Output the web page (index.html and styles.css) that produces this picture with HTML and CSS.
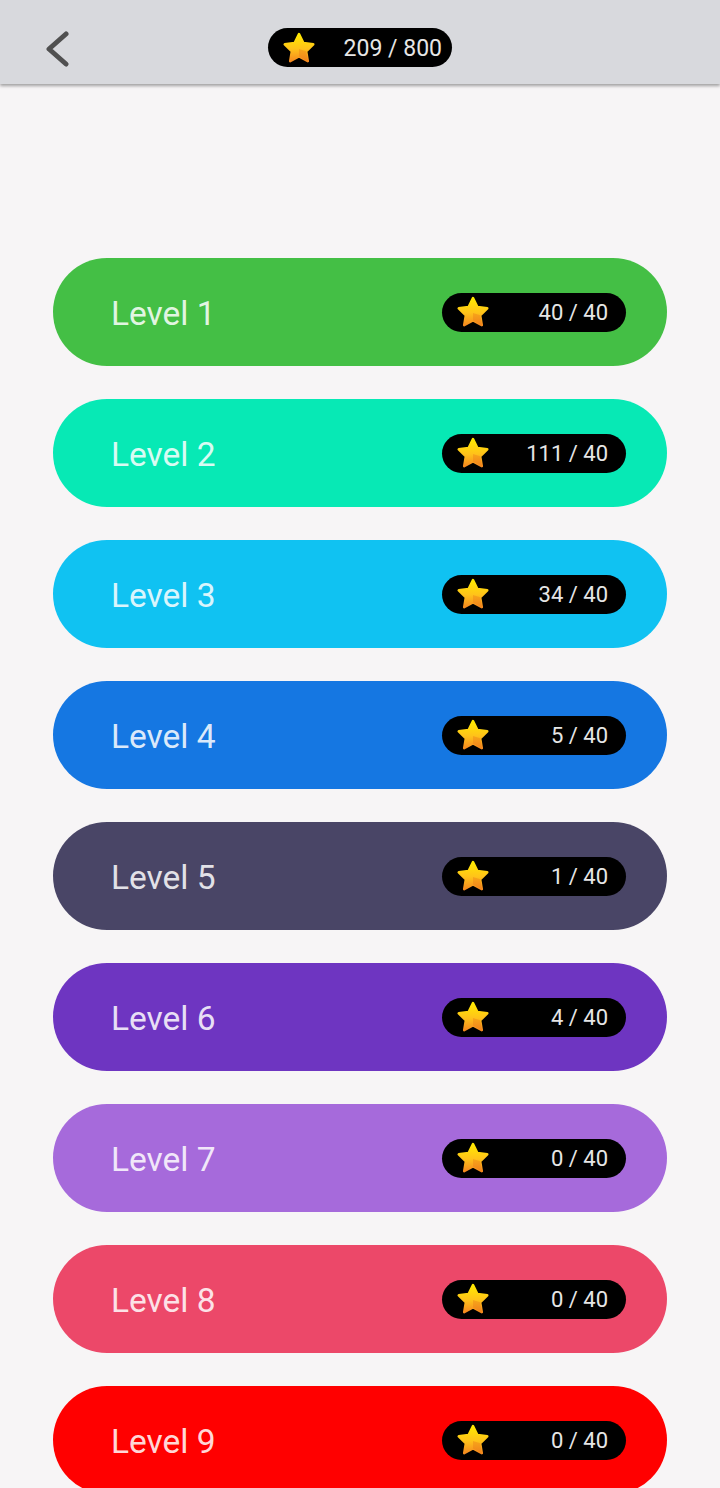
FILE: index.html
```html
<!DOCTYPE html>
<html>
<head>
<meta charset="utf-8">
<link rel="stylesheet" href="styles.css">
</head>
<body>
<svg width="0" height="0" class="defs">
  <defs>
    <linearGradient id="sg" x1="0" y1="0" x2="0" y2="1">
      <stop offset="0" stop-color="#ffea00"/>
      <stop offset="0.55" stop-color="#ffc21a"/>
      <stop offset="1" stop-color="#f58a1f"/>
    </linearGradient>
    <symbol id="star" viewBox="0 0 34 34">
      <polygon points="17,3 21.41,11.93 31.27,13.36 24.13,20.32 25.82,30.14 17,25.5 8.18,30.14 9.87,20.32 2.73,13.36 12.59,11.93" fill="url(#sg)" stroke="url(#sg)" stroke-width="2.5" stroke-linejoin="round"/>
      <polygon points="17,18 24.13,20.32 25.82,30.14 17,25.5" fill="#e8741a" opacity="0.35"/>
    </symbol>
  </defs>
</svg>
<header class="topbar">
  <button class="back" aria-label="Back">
    <svg width="30" height="40" viewBox="0 0 30 40"><polyline points="22,7 5,22 22,37" fill="none" stroke="#505050" stroke-width="5" stroke-linecap="round" stroke-linejoin="round"/></svg>
  </button>
  <div class="pill total">
    <svg class="star" width="34" height="34"><use href="#star"/></svg>
    <span class="count">209 / 800</span>
  </div>
</header>
<main class="levels">
  <div class="level c1"><span class="name">Level 1</span><div class="pill"><svg class="star" width="34" height="34"><use href="#star"/></svg><span class="count">40 / 40</span></div></div>
  <div class="level c2"><span class="name">Level 2</span><div class="pill"><svg class="star" width="34" height="34"><use href="#star"/></svg><span class="count">111 / 40</span></div></div>
  <div class="level c3"><span class="name">Level 3</span><div class="pill"><svg class="star" width="34" height="34"><use href="#star"/></svg><span class="count">34 / 40</span></div></div>
  <div class="level c4"><span class="name">Level 4</span><div class="pill"><svg class="star" width="34" height="34"><use href="#star"/></svg><span class="count">5 / 40</span></div></div>
  <div class="level c5"><span class="name">Level 5</span><div class="pill"><svg class="star" width="34" height="34"><use href="#star"/></svg><span class="count">1 / 40</span></div></div>
  <div class="level c6"><span class="name">Level 6</span><div class="pill"><svg class="star" width="34" height="34"><use href="#star"/></svg><span class="count">4 / 40</span></div></div>
  <div class="level c7"><span class="name">Level 7</span><div class="pill"><svg class="star" width="34" height="34"><use href="#star"/></svg><span class="count">0 / 40</span></div></div>
  <div class="level c8"><span class="name">Level 8</span><div class="pill"><svg class="star" width="34" height="34"><use href="#star"/></svg><span class="count">0 / 40</span></div></div>
  <div class="level c9"><span class="name">Level 9</span><div class="pill"><svg class="star" width="34" height="34"><use href="#star"/></svg><span class="count">0 / 40</span></div></div>
</main>
</body>
</html>
```

FILE: styles.css
```css
* { box-sizing: border-box; }
html, body {
  margin: 0;
  padding: 0;
  background: #f7f5f6;
  font-family: Roboto, "Liberation Sans", sans-serif;
  overflow: hidden;
  height: 1488px;
}
.defs { position: absolute; width: 0; height: 0; }
.topbar {
  height: 84px;
  background: #d8d9dd;
  display: flex;
  align-items: center;
  justify-content: center;
  position: relative;
  box-shadow: 0 2px 3px rgba(0,0,0,0.35);
  z-index: 1;
}
.back {
  position: absolute;
  left: 44px;
  top: 27px;
  background: none;
  border: 0;
  padding: 0;
  width: 30px;
  height: 40px;
}
.back svg { display: block; }
.pill {
  width: 184px;
  height: 39px;
  border-radius: 20px;
  background: #000;
  display: flex;
  align-items: center;
  justify-content: space-between;
  padding: 0 18px 0 14px;
}
.pill.total {
  margin-top: 11px;
  padding-right: 10px;
}
.pill.total .count { font-size: 23px; }
.star { display: block; flex: none; }
.count {
  color: #e6e6e6;
  font-size: 22px;
  line-height: 1;
  padding-top: 2px;
}
.levels {
  display: flex;
  flex-direction: column;
  gap: 33px;
  padding: 174px 53px 0;
}
.level {
  height: 108px;
  border-radius: 54px;
  display: flex;
  align-items: center;
  justify-content: space-between;
  padding: 0 41px 0 58px;
  flex: none;
}
.name {
  color: rgba(255,255,255,0.86);
  font-size: 33.5px;
  line-height: 1;
  padding-top: 3px;
}
.c1 { background: #44bf45; }
.c2 { background: #07e9b5; }
.c3 { background: #10c2f2; }
.c4 { background: #1577e2; }
.c5 { background: #494566; }
.c6 { background: #6e35c1; }
.c7 { background: #a66adb; }
.c8 { background: #ec4869; }
.c9 { background: #ff0000; }
```
